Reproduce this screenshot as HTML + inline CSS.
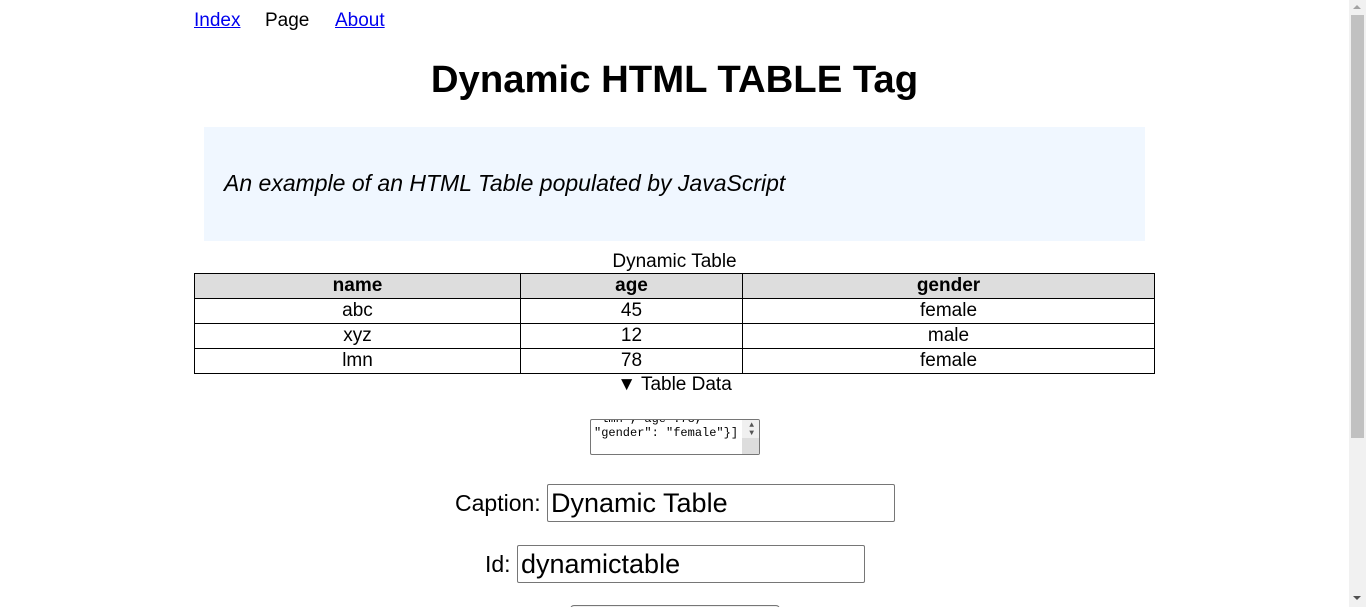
<!DOCTYPE html>
<html style="overflow:hidden;height:607px"><head><style>
body{margin:0;width:1366px;height:607px;overflow:hidden;font-family:"Liberation Sans",Arial,sans-serif;background:#fff;position:relative}
.a{position:absolute}
a{color:#00e;text-decoration:underline}
table{border-collapse:collapse;width:961px;font-size:19px;text-align:center}
td,th{border:1px solid #000;padding:0;height:24px;line-height:22px}
th{background:#ddd}
input{font-family:"Liberation Sans",Arial,sans-serif;font-size:27px;border:1px solid #767676;border-radius:2px;padding:1px 3px;box-sizing:border-box}
</style></head><body>
<div class="a" style="left:194px;top:9px;font-size:19px;line-height:24px"><a>Index</a><span style="position:absolute;left:71px">Page</span><a style="position:absolute;left:141px">About</a></div>
<div class="a" style="left:0;width:1349px;top:57px;text-align:center;font-size:38.3px;font-weight:bold;line-height:46px">Dynamic HTML TABLE Tag</div>
<div class="a" style="left:204px;top:127px;width:941px;height:114px;background:#f0f7ff"><div style="position:absolute;left:20px;top:43px;font-style:italic;font-size:23px">An example of an HTML Table populated by JavaScript</div></div>
<div class="a" style="left:194px;top:250px;width:961px;text-align:center;font-size:19px;line-height:23px">Dynamic Table</div>
<table class="a" style="left:194px;top:273px">
<tr><th style="width:325px">name</th><th style="width:221px">age</th><th>gender</th></tr>
<tr><td>abc</td><td>45</td><td>female</td></tr>
<tr><td>xyz</td><td>12</td><td>male</td></tr>
<tr><td>lmn</td><td>78</td><td>female</td></tr>
</table>
<div class="a" style="left:0;width:1349px;top:373px;text-align:center;font-size:19px;line-height:23px">▼ Table Data</div>
<div class="a" style="left:590px;top:419px;width:168px;height:34px;border:1px solid #767676;border-radius:2px;overflow:hidden;font-family:'Liberation Mono',monospace;font-size:12px;line-height:14px">
<div style="position:absolute;left:3px;top:-8px;white-space:pre">"lmn","age":78,
"gender": "female"}]</div>
<div style="position:absolute;right:0;top:0;width:17px;height:34px;background:#f0f0f0"></div>
<div style="position:absolute;right:0;top:18px;width:17px;height:16px;background:#ddd"></div>
<div style="position:absolute;right:5px;top:2px;font-size:8px;color:#555;line-height:8px">▲<br>▼</div>
</div>
<div class="a" style="left:455px;top:484px;font-size:23px;line-height:38px">Caption:<input style="position:absolute;left:92px;top:0;width:348px;height:38px" value="Dynamic Table"></div>
<div class="a" style="left:485px;top:545px;font-size:23px;line-height:38px">Id:<input style="position:absolute;left:32px;top:0;width:348px;height:38px" value="dynamictable"></div>
<div class="a" style="left:570px;top:605px;width:208px;height:10px;border:1px solid #767676;border-radius:4px;background:#efefef"></div>
<div class="a" style="left:1349px;top:0;width:17px;height:607px;background:#f1f1f1"></div>
<div class="a" style="left:1351px;top:15px;width:13px;height:423px;background:#c1c1c1"></div>
<div class="a" style="left:1353px;top:5px;width:0;height:0;border-left:4px solid transparent;border-right:4px solid transparent;border-bottom:4px solid #a3a3a3"></div>
<div class="a" style="left:1353px;top:596px;width:0;height:0;border-left:4px solid transparent;border-right:4px solid transparent;border-top:4px solid #505050"></div>
</body></html>
